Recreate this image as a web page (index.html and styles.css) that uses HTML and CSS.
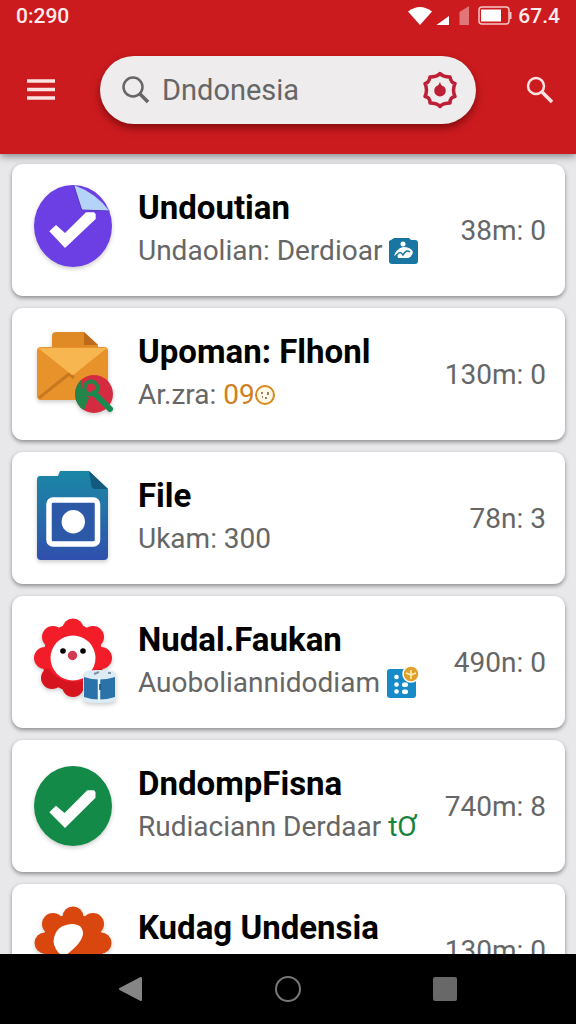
FILE: index.html
```html
<!DOCTYPE html>
<html lang="id">
  <head>
    <meta charset="UTF-8" />
    <meta name="viewport" content="width=device-width, initial-scale=1.0" />
    <title>Dndonesia</title>
    <link rel="stylesheet" href="styles.css">
  </head>
  <body>
    <header class="header">
      <div class="status">
        <span>0:290</span>
        <div class="status-icons">
          <svg width="64" height="20" viewBox="0 0 64 20">
            <path d="M0 5.5Q12 -3.5 24 5.5L12 19Z" fill="#fff" />
            <path d="M28.5 19 41 10V19Z" fill="#fff" />
            <path d="M51.5 19V6L61 0V19Z" fill="#fff" opacity=".4" />
          </svg>
          <svg width="34" height="20" viewBox="0 0 34 20">
            <rect x="1" y="1" width="30" height="17" rx="3" fill="none" stroke="#f7c8c5" stroke-width="1.5" />
            <rect x="3" y="3.5" width="20" height="12" fill="#fff" />
            <path d="M32.5 6v7" stroke="#f7c8c5" stroke-width="2" />
          </svg>
          <span>67.4</span>
        </div>
      </div>
      <div class="toolbar">
        <button class="icon-button" aria-label="Menu">
          <svg width="28" height="22" viewBox="0 0 28 22">
            <path d="M0 2H28M0 10.5H28M0 19H28" stroke="#fbe3e1" stroke-width="3.5" />
          </svg>
        </button>
        <form class="search">
          <svg width="28" height="28" viewBox="0 0 28 28" fill="none" stroke="#666">
            <circle cx="11" cy="11" r="9.5" stroke-width="2.5" />
            <path d="M17.5 17.5 26 26" stroke-width="3.5" />
          </svg>
          <input class="search-input" type="text" value="Dndonesia" aria-label="Search">
          <button class="icon-button" type="button" aria-label="Settings">
            <svg width="36" height="38" viewBox="0 0 36 38">
              <path d="M18 2.5Q21 6 28 6Q29 12 33 12.5Q30 19 33 25.5Q28 26 28 32Q21 32 18 35.5Q15 32 8 32Q8 26 3 25.5Q6 19 3 12.5Q7 12 8 6Q15 6 18 2.5Z" fill="none" stroke="#bd2036" stroke-width="3.5" stroke-linejoin="round" />
              <path d="M18 11Q19 15 22 15.5A5.8 5.8 0 1 1 14 15.5Q17 14.5 18 11Z" fill="#bd2036" />
            </svg>
          </button>
        </form>
        <button class="icon-button" aria-label="Search">
          <svg width="28" height="28" viewBox="0 0 28 28" fill="none" stroke="#fbe3e1">
            <circle cx="10" cy="10" r="8" stroke-width="2.5" />
            <path d="M15.5 15.5 26 26" stroke-width="3.5" />
          </svg>
        </button>
      </div>
    </header>

    <main class="list">
      <article class="card">
        <svg class="card-icon" viewBox="0 0 88 92">
          <ellipse cx="41" cy="42" rx="39" ry="41" fill="#6b3fe4" />
          <path d="M41.7 1 49.7 26 77.3 27Q64 9 41.7 1Z" fill="#b4d3f6" />
          <path d="M41.7 1 49.7 26 77.3 27" fill="none" stroke="#5536bf" />
          <path d="M17.3 47.3 24 41 33 49 54 28.3H62L63.7 30V35L33 64Z" fill="#fff" />
        </svg>
        <div class="card-body">
          <h2 class="card-title">Undoutian</h2>
          <p class="card-sub">
            <span>Undaolian: Derdioar</span>
            <svg class="mark" viewBox="0 0 29 29">
              <path d="M2 3 5 1H20L22 3H26Q29 3 29 6V24Q29 27 26 27H3Q0 27 0 24V4Z" fill="#1976a3" />
              <circle cx="14" cy="7" r="2.5" fill="#fff" />
              <path d="M5 19Q7 12 14 10Q22 10 24 15Q23 20 19 21H9L8 17Z" fill="#fff" />
              <path d="M8 18Q11 13 14 18Q17 12 21 15" fill="none" stroke="#1976a3" stroke-width="1.5" />
            </svg>
          </p>
        </div>
        <span class="card-time">38m: 0</span>
      </article>

      <article class="card">
        <svg class="card-icon" viewBox="0 0 88 92">
          <path d="M20 23V8Q20 4 24 4H52L66 17V23Z" fill="#e08a26" />
          <path d="M52 4 66 17H52Z" fill="#bd6a1c" />
          <rect x="5" y="19" width="71" height="53" rx="4" fill="#e8922b" />
          <path d="M7 70 37 46 42 50" fill="none" stroke="#c97822" stroke-width="3" />
          <path d="M6 20H75L43 45.5Q41 48 38 45.5Z" fill="#f8b650" />
          <circle cx="62" cy="66" r="19" fill="#d52b40" />
          <path d="M50 51Q43 57 43 67Q44 78 52 82L57 70Q47 60 50 51Z" fill="#24854a" />
          <circle cx="59" cy="60" r="6.5" fill="#d52b40" stroke="#24854a" stroke-width="4" />
          <path d="M62 65 78 81" stroke="#168a50" stroke-width="6" stroke-linecap="round" />
        </svg>
        <div class="card-body">
          <h2 class="card-title">Upoman: Flhonl</h2>
          <p class="card-sub">
            <span>Ar.zra:</span>
            <span class="orange">09</span>
            <svg class="face" viewBox="0 0 22 22">
              <circle cx="11" cy="11" r="9" fill="#fff8e6" stroke="#d68a1c" stroke-width="2" />
              <path d="M8 8v2M14 8v3M8 13h1M11 14h2" stroke="#77583a" stroke-width="1.5" />
            </svg>
          </p>
        </div>
        <span class="card-time">130m: 0</span>
      </article>

      <article class="card">
        <svg class="card-icon" viewBox="0 0 88 92">
          <defs>
            <linearGradient id="file" x1="0" y1="0" x2="0" y2="1">
              <stop offset="0" stop-color="#1a86a5" />
              <stop offset=".4" stop-color="#2374a8" />
              <stop offset="1" stop-color="#304fad" />
            </linearGradient>
          </defs>
          <path d="M8 4H26L28 -1H57L76 17V84Q76 88 72 88H9Q5 88 5 84V8Q5 4 8 4Z" fill="url(#file)" />
          <path d="M57 -1 76 17H62Q59 16 59 11Z" fill="#145a7c" />
          <rect x="17" y="28" width="48.5" height="44" rx="4" fill="#2c58a8" stroke="#fff" stroke-width="5.5" />
          <circle cx="41.3" cy="49.7" r="11.7" fill="#fff" />
        </svg>
        <div class="card-body">
          <h2 class="card-title">File</h2>
          <p class="card-sub"><span>Ukam: 300</span></p>
        </div>
        <span class="card-time">78n: 3</span>
      </article>

      <article class="card">
        <svg class="card-icon" viewBox="0 0 88 92">
          <g fill="#d5141f">
            <circle cx="20" cy="62" r="11" />
            <circle cx="41" cy="70" r="11" />
            <circle cx="61" cy="62" r="11" />
            <circle cx="41" cy="44" r="31" />
          </g>
          <g fill="#f31d29">
            <circle cx="41" cy="37" r="29" />
            <circle cx="41" cy="13" r="10.5" />
            <circle cx="61" cy="21" r="11" />
            <circle cx="69" cy="42" r="11" />
            <circle cx="21" cy="21" r="11" />
            <circle cx="13" cy="42" r="11" />
          </g>
          <circle cx="41" cy="42" r="22.5" fill="#fff" />
          <circle cx="31" cy="35" r="2.8" />
          <circle cx="51" cy="35" r="2.8" />
          <circle cx="40.500" cy="39.5" r="4.7" fill="#d13a52" />
          <path d="M51 58Q52 54 67 54Q83 54 84 58V84Q83 87 67 87Q52 87 51 84Z" fill="#dcecf6" />
          <path d="M52 61Q67 66 83 61V81Q67 86 52 81Z" fill="#2b72aa" />
          <path d="M67 62V85" stroke="#e9f6fc" stroke-width="2.5" />
          <path d="M68 68v6" stroke="#16466e" stroke-width="1.5" />
          <path d="M62 58 67 56M76 57h3" stroke="#8094a3" stroke-width="2" />
        </svg>
        <div class="card-body">
          <h2 class="card-title">Nudal.Faukan</h2>
          <p class="card-sub">
            <span>Auoboliannidodiam</span>
            <svg class="mark" viewBox="0 0 29 29">
              <rect y="0" width="29" height="29" rx="3" fill="#178bc8" />
              <g fill="#fff">
                <circle cx="9.5" cy="8" r="2.3" />
                <circle cx="9.5" cy="15.5" r="2.3" />
                <circle cx="9.5" cy="22.5" r="2.3" />
                <rect x="15" y="13.5" width="6" height="4.5" rx="2" />
                <rect x="15" y="20.5" width="6" height="4.5" rx="2" />
              </g>
              <circle cx="24" cy="5" r="8" fill="#e2a12a" stroke="#fff" stroke-width="1.5" />
              <path d="M24 1V10M19 4 24 6 29 4" fill="none" stroke="#fff1bd" stroke-width="1.5" />
            </svg>
          </p>
        </div>
        <span class="card-time">490n: 0</span>
      </article>

      <article class="card">
        <svg class="card-icon" viewBox="0 0 88 92">
          <ellipse cx="41" cy="46" rx="39" ry="40" fill="#138a48" />
          <path d="M17.3 52.3 24 45.7 32.5 53 55.3 30.3H62L63.5 32V37.7L33 68Z" fill="#fff" />
        </svg>
        <div class="card-body">
          <h2 class="card-title">DndompFisna</h2>
          <p class="card-sub">
            <span>Rudiaciann Derdaar</span>
            <span class="green">tƠ</span>
          </p>
        </div>
        <span class="card-time">740m: 8</span>
      </article>

      <article class="card">
        <svg class="card-icon" viewBox="0 0 88 92">
          <g fill="#d9470f">
            <circle cx="41" cy="41" r="31" />
            <circle cx="41" cy="13" r="10.5" />
            <circle cx="61" cy="20" r="11" />
            <circle cx="69" cy="39" r="10.5" />
            <circle cx="62" cy="60" r="11" />
            <circle cx="41" cy="69" r="11" />
            <circle cx="20" cy="60" r="11" />
            <circle cx="13" cy="39" r="10.5" />
            <circle cx="21" cy="20" r="11" />
          </g>
          <path d="M21.5 37Q23 21 40 20Q51 20 51 30Q50 39 34 51H29Q22 45 21.5 37Z" fill="#fff" />
        </svg>
        <div class="card-body">
          <h2 class="card-title">Kudag Undensia</h2>
          <p class="card-sub"></p>
        </div>
        <span class="card-time">130m: 0</span>
      </article>
    </main>

    <nav class="navbar">
      <button class="icon-button" aria-label="Back">
        <svg width="26" height="26" viewBox="0 0 26 26"><path d="M2 13 23 2V24Z" fill="#858585" stroke="#858585" stroke-width="2" stroke-linejoin="round" /></svg>
      </button>
      <button class="icon-button" aria-label="Home">
        <svg width="26" height="26" viewBox="0 0 26 26"><circle cx="13" cy="13" r="12" fill="none" stroke="#777" stroke-width="2" /></svg>
      </button>
      <button class="icon-button" aria-label="Recent apps">
        <svg width="26" height="26" viewBox="0 0 26 26"><rect x="1" y="1" width="24" height="24" rx="2" fill="#686868" /></svg>
      </button>
    </nav>
  </body>
</html>
```

FILE: styles.css
```css
* {
  box-sizing: border-box;
}

body {
  font-family: Roboto, "Liberation Sans", sans-serif;
  background: #e8e8ea;
  display: flex;
  flex-direction: column;
  height: 100vh;
  margin: 0;
}

svg {
  display: block;
  flex: none;
  overflow: visible;
}

.header {
  flex: none;
  background: #cc1b1f;
  padding-bottom: 30px;
  box-shadow: 0 2px 8px rgba(0, 0, 0, 0.45);
  position: relative;
}

.status {
  display: flex;
  justify-content: space-between;
  align-items: center;
  height: 32px;
  padding: 0 16px;
  color: #fdeceb;
  font-size: 21px;
  font-weight: 500;
}

.status-icons {
  display: flex;
  align-items: center;
  gap: 6px;
}

.toolbar {
  display: flex;
  align-items: center;
  padding: 24px 22px 0 27px;
}

.icon-button {
  background: none;
  border: none;
  padding: 0;
  cursor: pointer;
}

.search {
  flex: 1;
  min-width: 0;
  display: flex;
  align-items: center;
  gap: 12px;
  height: 68px;
  margin: 0 50px 0 45px;
  padding: 0 18px 0 22px;
  border-radius: 34px;
  background: #eeecec;
  box-shadow: 0 4px 8px rgba(80, 0, 0, 0.6);
}

.search-input {
  flex: 1;
  min-width: 0;
  border: none;
  outline: none;
  padding: 0;
  background: none;
  color: #666;
  font-family: inherit;
  font-size: 29px;
}

.list {
  flex: 1;
  min-height: 0;
  overflow: hidden;
  display: flex;
  flex-direction: column;
  gap: 12px;
  padding: 10px 11px 0 12px;
}

.card {
  flex: none;
  display: flex;
  align-items: center;
  min-height: 132px;
  padding: 0 19px 0 20px;
  border-radius: 11px;
  background: #fff;
  box-shadow: 0 2px 4px rgba(0, 0, 0, 0.4);
}

.card-icon {
  width: 88px;
  height: 92px;
  margin-right: 18px;
  filter: drop-shadow(0 2px 2px rgba(0, 0, 0, 0.2));
}

.card-body {
  flex: 1;
  min-width: 0;
  white-space: nowrap;
}

.card-title {
  margin: 0;
  color: #000;
  font-size: 33px;
  font-weight: 700;
  line-height: 42px;
}

.card-sub {
  display: flex;
  align-items: center;
  gap: 7px;
  height: 44px;
  margin: 0;
  color: #666;
  font-size: 28px;
  line-height: 44px;
}

.card-time {
  color: #666;
  font-size: 28px;
  white-space: nowrap;
}

.mark {
  width: 29px;
  height: 29px;
}

.face {
  width: 22px;
  height: 22px;
  margin-left: -8px;
}

.orange {
  color: #cf801c;
}

.green {
  color: #16843e;
}

.navbar {
  flex: none;
  display: flex;
  justify-content: space-between;
  align-items: center;
  height: 70px;
  padding: 0 20.5%;
  background: #000;
}
```
